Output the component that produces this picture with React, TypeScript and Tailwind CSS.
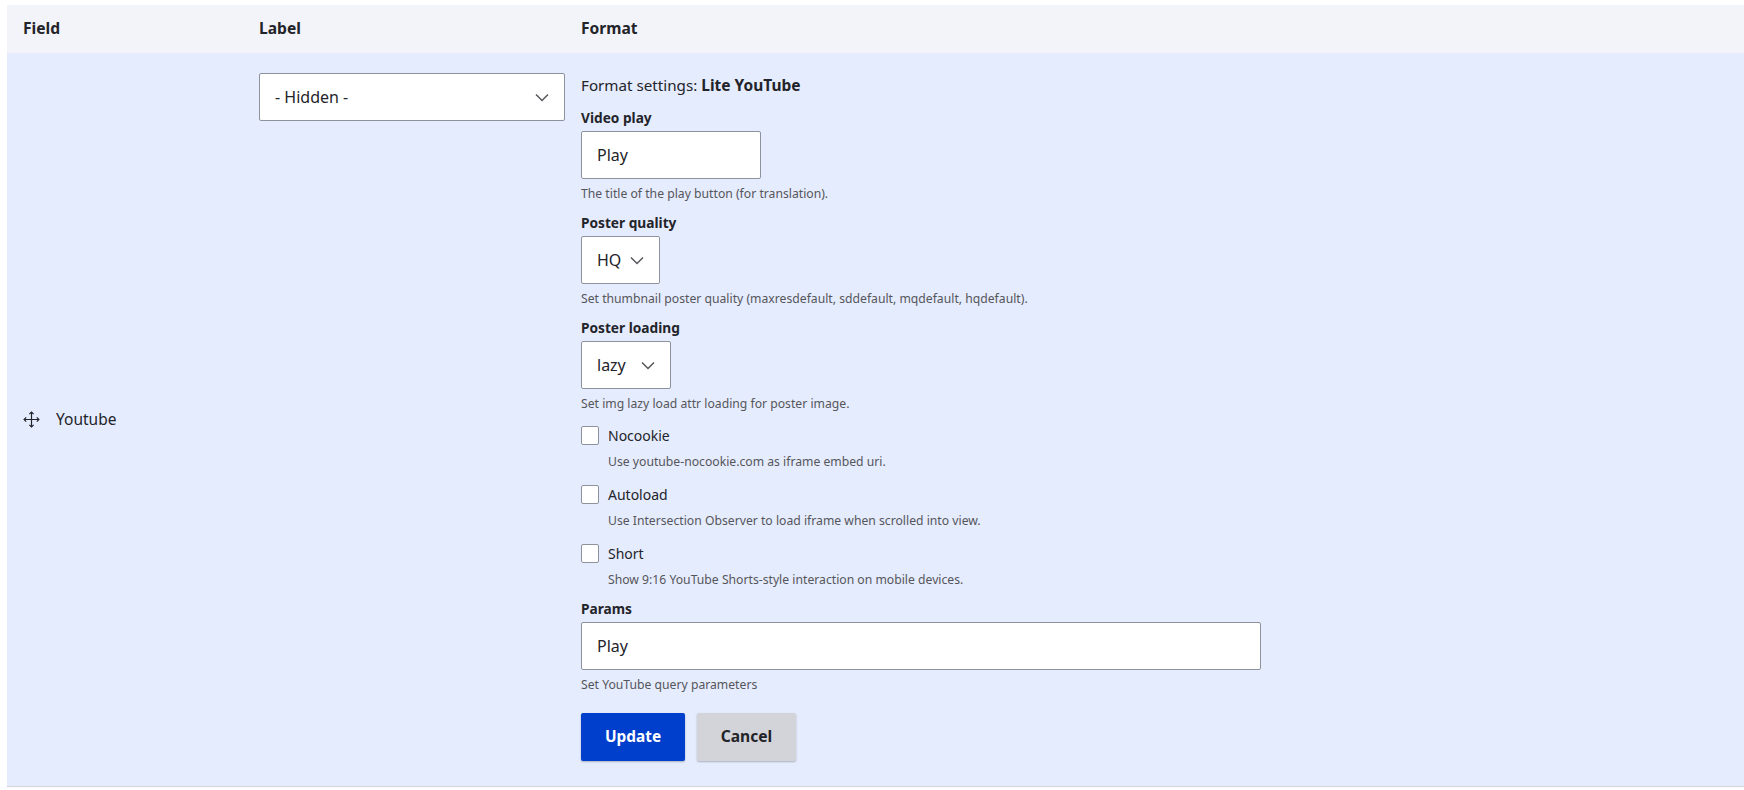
const FONT = "font-['Noto_Sans',sans-serif]";

function Chevron({ className }: { className?: string }) {
  return (
    <svg className={className} width="14" height="9" viewBox="0 0 14 9" fill="none">
      <path d="M1 1.5l6 6 6-6" stroke="#55565b" strokeWidth="1.5" />
    </svg>
  );
}

function MoveIcon() {
  return (
    <svg width="17" height="17" viewBox="0 0 17 17" fill="none" stroke="#232429" strokeWidth="1.2">
      <path d="M8.5 1v15M1 8.5h15" />
      <path d="M6.4 3.2l2.1-2.1 2.1 2.1M6.4 13.8l2.1 2.1 2.1-2.1M3.2 6.4L1.1 8.5l2.1 2.1M13.8 6.4l2.1 2.1-2.1 2.1" />
    </svg>
  );
}

function Help({ children, className = "" }: { children: React.ReactNode; className?: string }) {
  return <p className={`text-[12.2px] leading-[18px] text-[#55565b] ${className}`}>{children}</p>;
}

function FieldLabel({ children }: { children: React.ReactNode }) {
  return <div className="text-[13.7px] leading-[18px] font-bold text-[#232429]">{children}</div>;
}

function Box({ children, className = "" }: { children: React.ReactNode; className?: string }) {
  return (
    <div className={`flex h-[48px] items-center justify-between rounded-[2px] border border-[#8e929c] bg-white px-[15px] text-[16px] text-[#232429] ${className}`}>
      {children}
    </div>
  );
}

function CheckRow({ label, help, className = "" }: { label: string; help: string; className?: string }) {
  return (
    <div className={className}>
      <div className="flex h-[18px] items-center">
        <span className="h-[19px] w-[18px] rounded-[2px] border border-[#8e929c] bg-white" />
        <span className="ml-[9px] text-[14px] text-[#232429]">{label}</span>
      </div>
      <Help className="ml-[27px] mt-[9px]">{help}</Help>
    </div>
  );
}

export default function App() {
  return (
    <div className={`h-[790px] w-[1744px] overflow-hidden bg-white pl-[7px] pt-[5px] ${FONT}`}>
      {/* Header */}
      <div className="grid h-[48px] grid-cols-[252px_322px_1fr] items-center bg-[#f3f4f9] text-[15.6px] font-bold text-[#232429]">
        <div className="pl-[16px]">Field</div>
        <div>Label</div>
        <div>Format</div>
      </div>

      {/* Row */}
      <div className="grid h-[734px] grid-cols-[252px_322px_1fr] border-b border-[#d3d4d9] bg-[#e5ecfe]">
        <div className="flex items-center pl-[16px] text-[15.5px] text-[#232429]">
          <MoveIcon />
          <span className="ml-[16px]">Youtube</span>
        </div>

        <div className="pt-[20px]">
          <Box className="w-[306px] text-[15.3px]">
            - Hidden -
            <Chevron />
          </Box>
        </div>

        <div className="pt-[23px]">
          <div className="text-[15.2px] leading-[18px] text-[#232429]">
            Format settings: <b className="text-[15.5px]">Lite YouTube</b>
          </div>

          <div className="mt-[15px]">
            <FieldLabel>Video play</FieldLabel>
            <Box className="mt-[4px] w-[180px]">Play</Box>
            <Help className="mt-[6px]">The title of the play button (for translation).</Help>
          </div>

          <div className="mt-[11px]">
            <FieldLabel>Poster quality</FieldLabel>
            <Box className="mt-[4px] w-[79px]">
              HQ
              <Chevron />
            </Box>
            <Help className="mt-[6px]">Set thumbnail poster quality (maxresdefault, sddefault, mqdefault, hqdefault).</Help>
          </div>

          <div className="mt-[11px]">
            <FieldLabel>Poster loading</FieldLabel>
            <Box className="mt-[4px] w-[90px]">
              lazy
              <Chevron />
            </Box>
            <Help className="mt-[6px]">Set img lazy load attr loading for poster image.</Help>
          </div>

          <CheckRow className="mt-[13px]" label="Nocookie" help="Use youtube-nocookie.com as iframe embed uri." />
          <CheckRow className="mt-[14px]" label="Autoload" help="Use Intersection Observer to load iframe when scrolled into view." />
          <CheckRow className="mt-[14px]" label="Short" help="Show 9:16 YouTube Shorts-style interaction on mobile devices." />

          <div className="mt-[11px]">
            <FieldLabel>Params</FieldLabel>
            <Box className="mt-[4px] w-[680px]">Play</Box>
            <Help className="mt-[6px]">Set YouTube query parameters</Help>
          </div>

          <div className="mt-[19px] flex gap-[12px]">
            <button className="h-[48px] w-[104px] rounded-[2px] bg-[#003ecc] text-[15.4px] font-bold text-white shadow-[0_1px_2px_rgba(0,0,0,0.25)]">
              Update
            </button>
            <button className="h-[48px] w-[99px] rounded-[2px] bg-[#d3d4d9] text-[15.6px] font-bold text-[#232429] shadow-[0_1px_2px_rgba(0,0,0,0.25)]">
              Cancel
            </button>
          </div>
        </div>
      </div>
    </div>
  );
}
